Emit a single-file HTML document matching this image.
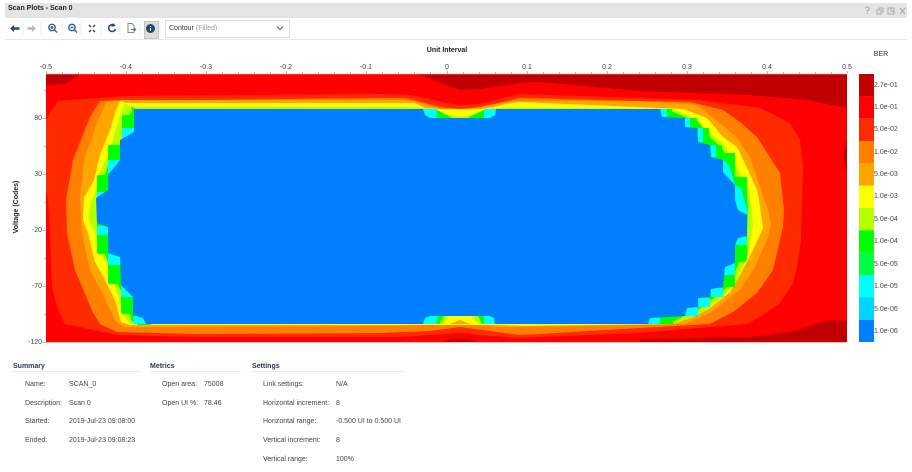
<!DOCTYPE html>
<html><head><meta charset="utf-8"><style>
html,body{margin:0;padding:0;background:#fff}
body{width:912px;height:472px;position:relative;overflow:hidden;font-family:"Liberation Sans",sans-serif;font-size:7px;color:#444;filter:blur(.35px)}
.t{position:absolute;white-space:nowrap;line-height:10px;height:10px}
.b{font-weight:bold;color:#222}
.c{transform:translateX(-50%)}
.r{transform:translateX(-100%)}
.l{position:absolute;background:#ececec}
</style></head><body>
<div style="position:absolute;left:5px;top:3px;width:902px;height:15px;background:#e4e4e4"></div>
<div class="t b" style="left:8px;top:4px">Scan Plots - Scan 0</div>
<svg style="position:absolute;left:860px;top:3px" width="50" height="15" fill="none" stroke="#aaa" stroke-width="1">
<path d="M5.500 5.500a1.800 1.800 0 1 1 1.800 2v1.200M7.300 10v1"/>
<path d="M17 7h4v4h-4zM19 7V5h4v4h-2"/>
<path d="M28 5h6v6h-6zM31 5v3h3"/>
<path d="M40 5l5 6M45 5l-5 6"/>
</svg>
<svg style="position:absolute;left:0;top:18px" width="165" height="22">
<path d="M10 10.500l4-3.500v2.300h5.500v2.400h-5.500v2.300z" fill="#234a80"/>
<path d="M36 10.500l-4-3.500v2.300h-4.500v2.400h4.500v2.300z" fill="#b9b9b9"/>
<path d="M23 4v13M41 4v13M62 4v13M81 4v13M101 4v13M120 4v13M140 4v13M160 4v13" stroke="#eee"/>
<g fill="none" stroke="#2f5f8f" stroke-width="1.400"><circle cx="52" cy="9.500" r="3.200"/><path d="M54.500 12l2.500 2.500M50.500 9.500h3M52 8v3"/><circle cx="72" cy="9.500" r="3.200"/><path d="M74.500 12l2.500 2.500M70.500 9.500h3"/></g>
<g fill="none" stroke="#234a80" stroke-width="1.500"><path d="M89 7l2 2M95 7l-2 2M89 14l2-2M95 14l-2-2"/><path d="M115 8a3.500 3.500 0 1 0 .5 3" /></g>
<path d="M114 5v3.500h-3.500z" fill="#234a80"/>
<path d="M128 5.500h4l2 2v7h-6z" fill="#fff" stroke="#7a8a99"/>
<path d="M131 11h3V9l2.500 2.500-2.500 2.500v-2h-3z" fill="#3aa63a"/>
</svg>
<div style="position:absolute;left:143.500px;top:20.500px;width:13px;height:16px;background:#dcdcdc;border:1px solid #c4c4c4"></div>
<svg style="position:absolute;left:145px;top:23px" width="12" height="12"><circle cx="5.500" cy="5.500" r="4.500" fill="#1f4777"/><path d="M5.500 3v1M5.500 5v3" stroke="#fff" stroke-width="1.200"/></svg>
<div style="position:absolute;left:165px;top:20px;width:123px;height:16px;border:1px solid #dedede;background:#fff"></div>
<div class="t" style="left:169px;top:24px;color:#333">Contour <span style="color:#999">(Filled)</span></div>
<svg style="position:absolute;left:276px;top:25px" width="9" height="7"><path d="M1 1.500l3 3 3-3" fill="none" stroke="#555"/></svg>
<div class="l" style="left:5px;top:39px;width:902px;height:1px;background:#e8e8e8"></div>

<div class="t b c" style="left:447px;top:46px">Unit Interval</div>
<div class="t c" style="left:881px;top:50px;color:#333">BER</div>
<div class="t c" style="left:46px;top:63px">-0.5</div>
<div class="t c" style="left:126px;top:63px">-0.4</div>
<div class="t c" style="left:206px;top:63px">-0.3</div>
<div class="t c" style="left:286px;top:63px">-0.2</div>
<div class="t c" style="left:366px;top:63px">-0.1</div>
<div class="t c" style="left:447px;top:63px">0</div>
<div class="t c" style="left:527px;top:63px">0.1</div>
<div class="t c" style="left:607px;top:63px">0.2</div>
<div class="t c" style="left:687px;top:63px">0.3</div>
<div class="t c" style="left:767px;top:63px">0.4</div>
<div class="t c" style="left:847px;top:63px">0.5</div>
<div class="t r" style="left:42px;top:114px">80</div>
<div class="t r" style="left:42px;top:170px">30</div>
<div class="t r" style="left:42px;top:226px">-20</div>
<div class="t r" style="left:42px;top:282px">-70</div>
<div class="t r" style="left:42px;top:338px">-120</div>
<div class="t b" style="left:17px;top:207px;transform:translate(-50%,-50%) rotate(-90deg)">Voltage (Codes)</div>

<svg style="position:absolute;left:0;top:0" width="912" height="350">
<defs><clipPath id="p"><rect x="46" y="74" width="801" height="268"/></clipPath></defs>
<g stroke="#999" stroke-width="1" opacity=".7">
<path d="M46.500 71v3M126.500 71v3M206.500 71v3M286.500 71v3M366.500 71v3M447.500 71v3M527.500 71v3M607.500 71v3M687.500 71v3M767.500 71v3M847.500 71v3"/>
<path d="M62.500 72v2M78.500 72v2M94.500 72v2M110.500 72v2M142.500 72v2M158.500 72v2M174.500 72v2M190.500 72v2M222.500 72v2M238.500 72v2M254.500 72v2M270.500 72v2M302.500 72v2M318.500 72v2M334.500 72v2M350.500 72v2M382.500 72v2M398.500 72v2M414.500 72v2M430.500 72v2M463.500 72v2M479.500 72v2M495.500 72v2M511.500 72v2M543.500 72v2M559.500 72v2M575.500 72v2M591.500 72v2M623.500 72v2M639.500 72v2M655.500 72v2M671.500 72v2M703.500 72v2M719.500 72v2M735.500 72v2M751.500 72v2M783.500 72v2M799.500 72v2M815.500 72v2M831.500 72v2"/>
<path d="M43 118.500h3M43 174.500h3M43 230.500h3M43 286.500h3M43 342.500h3M44 90.500h2M44 146.500h2M44 202.500h2M44 258.500h2M44 314.500h2"/>
</g>
<g clip-path="url(#p)">
<rect x="46" y="74" width="801" height="268" fill="#ff0000"/>
<!-- dark red -->
<g fill="#c00000">
<polygon points="46,74 80,74 72,80 64,84 46,85"/>
<polygon points="415,74 847,74 847,108 807,100 750,95 640,91 540,82 520,83 500,86 480,89 460,90 445,85 430,78"/>
<polygon points="847,140 844,150 843,158 847,172"/>
<polygon points="847,342 640,342 640,339 750,337 790,332 820,323 830,320 847,321"/>
<polygon points="443,342 450,339 460,338 470,339 477,342"/>
</g>
<!-- 5e-2 -->
<polygon fill="#ff2a00" points="46,120 50,113 58,101 100,98 123,96 380,94 410,95 430,99 445,103 460,105 480,104 495,100 520,94 640,98 700,100 760,108 790,123 800,140 803,167 802,200 801,240 797,267 793,283 780,303 763,315 747,324 640,333 540,337 520,338 490,336 460,333 430,335 400,337 200,337 117,335 65,324 58,310 52,287 50,233 48,200 47,193 46,193"/>
<!-- 1e-2 -->
<polygon fill="#ff8000" points="100,101 90,117 73,160 66,200 67,233 75,270 93,313 100,324 117,332 200,334 380,333 430,331 460,327 490,331 520,335 540,334 640,328 710,324 733,312 757,293 773,270 783,227 784,210 780,173 757,137 740,122 723,110 690,102 640,101 520,98 500,103 480,107 460,109 440,107 425,103 405,98 380,98"/>
<!-- 5e-3 -->
<polygon fill="#ffa500" points="107,101 98,120 84,160 80,200 82,233 90,270 108,305 116,322 125,327 400,326 430,324 445,323 460,323 475,324 500,327 515,327 640,325 685,324 710,313 740,290 755,267 768,237 771,225 768,210 760,187 750,157 737,138 720,123 697,105 640,101 510,101 490,105 470,109 440,109 420,103 405,100 125,100"/>
<!-- 1e-3 yellow -->
<polygon fill="#ffff00" points="121,100 116,110 110,130 100,155 94,180 84,198 83,220 88,233 95,262 105,280 115,300 121,322 130,325 500,325 520,326 673,324 693,317 710,308 730,292 740,275 753,250 763,228 759,200 757,190 748,170 737,147 723,137 707,118 683,109 520,102 505,104 495,107 480,109 440,109 425,108 415,103 125,103"/>
<!-- 5e-4 lime -->
<polygon fill="#b4ff00" points="125,103 122,112 116,128 110,150 100,172 96,190 90,205 88,218 95,232 100,250 110,272 118,295 124,315 130,324 673,324 698,315 723,297 737,280 748,255 753,225 752,210 748,188 737,167 723,143 712,135 695,119 673,109 520,107.500 495,108 484,110 475,114 460,117 445,114 437,110 425,108 400,107 130,107"/>
<!-- 1e-4 green -->
<polygon fill="#00ff00" points="131,106 132,111 127,118 124,128 122,138 118,158 108,165 106,172 99,196 97,212 97,228 98,240 104,252 108,262 114,272 118,285 126,300 132,322 140,324 667,324 698,310 711,300 723,292 733,277 740,260 747,238 748,210 747,193 735,175 723,150 710,137 697,120 685,117 667,109 497,109 494,118 425,118 422,109 135,109"/>
<g fill="#00ff00">
<rect x="122" y="115" width="13" height="14" rx="2"/>
<rect x="108" y="145" width="14" height="16" rx="2"/>
<rect x="97" y="175" width="12" height="18" rx="2"/>
<rect x="97" y="234" width="12" height="20" rx="2"/>
<rect x="108" y="264" width="14" height="20" rx="2"/>
<rect x="121" y="293" width="13" height="21" rx="2"/>
<rect x="137" y="320" width="14" height="5"/>
<rect x="660" y="109" width="12" height="8"/>
<rect x="685" y="118" width="12" height="9"/>
<rect x="698" y="128" width="11" height="13"/>
<rect x="711" y="145" width="11" height="14"/>
<rect x="723" y="153" width="12" height="20"/>
<rect x="736" y="177" width="11" height="26"/>
<rect x="735" y="244" width="12" height="18" rx="3"/>
<rect x="723" y="274" width="12" height="13" rx="2"/>
<rect x="711" y="287" width="12" height="10"/>
<rect x="698" y="297" width="12" height="10"/>
<rect x="686" y="307" width="12" height="9"/>
<rect x="660" y="317" width="13" height="7"/>
<polygon points="437,110 445,114 452,118 437,118"/>
<polygon points="484,110 475,114 468,118 484,118"/>
</g>
<!-- bottom bump -->
<polygon fill="#00ff00" points="437,316 483,316 484,324 437,324"/>
<polygon fill="#b4ff00" points="444,316 478,316 482,324 439,324"/>
<polygon fill="#ffff00" points="449,316 472,316 478,324 444,324"/>
<polygon fill="#ffa500" points="450,324 460,320 470,324"/>
<!-- cyan -->
<g fill="#00ffff">
<polygon points="423,109 437,109 437,118 430,118 425,115"/>
<polygon points="484,109 496,109 495,115 490,118 484,118"/>
<polygon points="423,324 425,318 431,316 437,316 437,324"/>
<polygon points="484,316 491,316 495,320 495,324 484,324"/>
<rect x="660" y="109" width="7" height="8.500" rx="1"/>
<rect x="685" y="118" width="5" height="9.500" rx="1"/>
<rect x="698" y="128" width="5" height="14" rx="1"/>
<rect x="711" y="145" width="5" height="12" rx="1"/>
<polygon points="723,160 729,165 735,185 723,172"/>
<polygon points="735,185 741,188 748,212 747,215 738,210 735,200"/>
<rect x="735" y="236" width="12" height="9" rx="3"/>
<rect x="723" y="263" width="12" height="12" rx="3"/>
<rect x="711" y="288" width="12" height="9" rx="2"/>
<rect x="698" y="298" width="12" height="9" rx="2"/>
<rect x="686" y="307" width="12" height="9" rx="2"/>
<rect x="648" y="317" width="12" height="7" rx="2"/>
<rect x="122" y="128" width="13" height="14" rx="2"/>
<rect x="108" y="160" width="14" height="15" rx="2"/>
<rect x="97" y="192" width="12" height="9" rx="2"/>
<rect x="97" y="226" width="12" height="9" rx="2"/>
<rect x="108" y="253" width="14" height="12" rx="2"/>
<rect x="121" y="285" width="13" height="12" rx="2"/>
<rect x="133" y="316" width="13" height="8" rx="2"/>
</g>
<!-- blue -->
<polygon fill="#0080ff" points="134,109 423,109 425,115 430,118 490,118 495,115 496,109 660,109 662,117 685,118 685,127 697,128 698,142 710,145 711,157 723,160 723,172 735,185 735,200 738,210 747,215 747,236 738,238 735,245 735,263 725,267 723,287 711,289 710,297 698,298 698,307 687,308 685,316 650,318 648,324 495,324 494,318 490,316 430,316 425,318 423,324 146,324 143,318 133,315 133,297 121,285 120,257 108,253 108,227 97,223 96,198 108,190 108,175 120,160 120,140 134,132"/>
</g>
<rect x="46" y="73.500" width="801" height="1" fill="#f7a0a0" opacity=".6"/>
<rect x="46" y="342" width="801" height="1" fill="#f7a0a0" opacity=".7"/>
<g>
<rect x="859" y="74" width="15" height="22.400" fill="#c00000"/>
<rect x="859" y="96.300" width="15" height="22.400" fill="#ff0000"/>
<rect x="859" y="118.700" width="15" height="22.400" fill="#ff2a00"/>
<rect x="859" y="141" width="15" height="22.400" fill="#ff8000"/>
<rect x="859" y="163.300" width="15" height="22.400" fill="#ffa500"/>
<rect x="859" y="185.700" width="15" height="22.400" fill="#ffff00"/>
<rect x="859" y="208" width="15" height="22.400" fill="#b4ff00"/>
<rect x="859" y="230.300" width="15" height="22.400" fill="#00ff00"/>
<rect x="859" y="252.700" width="15" height="22.400" fill="#00ff40"/>
<rect x="859" y="275" width="15" height="22.400" fill="#00ffff"/>
<rect x="859" y="297.300" width="15" height="22.400" fill="#00d4ff"/>
<rect x="859" y="319.700" width="15" height="22.300" fill="#0080ff"/>
</g>
</svg>
<div class="t" style="left:874px;top:81px">2.7e-01</div>
<div class="t" style="left:874px;top:103px">1.0e-01</div>
<div class="t" style="left:874px;top:125px">5.0e-02</div>
<div class="t" style="left:874px;top:148px">1.0e-02</div>
<div class="t" style="left:874px;top:170px">5.0e-03</div>
<div class="t" style="left:874px;top:192px">1.0e-03</div>
<div class="t" style="left:874px;top:215px">5.0e-04</div>
<div class="t" style="left:874px;top:237px">1.0e-04</div>
<div class="t" style="left:874px;top:260px">5.0e-05</div>
<div class="t" style="left:874px;top:282px">1.0e-05</div>
<div class="t" style="left:874px;top:305px">5.0e-06</div>
<div class="t" style="left:874px;top:327px">1.0e-06</div>

<div class="t b" style="left:13px;top:362px;color:#2a3a50">Summary</div>
<div class="l" style="left:13px;top:371px;width:126px;height:1px"></div>
<div class="t" style="left:25px;top:380px">Name:</div><div class="t" style="left:69px;top:380px">SCAN_0</div>
<div class="t" style="left:25px;top:399px">Description:</div><div class="t" style="left:69px;top:399px">Scan 0</div>
<div class="t" style="left:25px;top:417px">Started:</div><div class="t" style="left:69px;top:417px">2019-Jul-23 09:08:00</div>
<div class="t" style="left:25px;top:436px">Ended:</div><div class="t" style="left:69px;top:436px">2019-Jul-23 09:08:23</div>

<div class="t b" style="left:150px;top:362px;color:#2a3a50">Metrics</div>
<div class="l" style="left:150px;top:371px;width:91px;height:1px"></div>
<div class="t" style="left:162px;top:380px">Open area:</div><div class="t" style="left:204px;top:380px">75008</div>
<div class="t" style="left:162px;top:399px">Open UI %:</div><div class="t" style="left:204px;top:399px">78.46</div>

<div class="t b" style="left:252px;top:362px;color:#2a3a50">Settings</div>
<div class="l" style="left:252px;top:371px;width:151px;height:1px"></div>
<div class="t" style="left:263px;top:380px">Link settings:</div><div class="t" style="left:336px;top:380px">N/A</div>
<div class="t" style="left:263px;top:399px">Horizontal increment:</div><div class="t" style="left:336px;top:399px">8</div>
<div class="t" style="left:263px;top:417px">Horizontal range:</div><div class="t" style="left:336px;top:417px">-0.500 UI to 0.500 UI</div>
<div class="t" style="left:263px;top:436px">Vertical increment:</div><div class="t" style="left:336px;top:436px">8</div>
<div class="t" style="left:263px;top:455px">Vertical range:</div><div class="t" style="left:336px;top:455px">100%</div>
</body></html>
